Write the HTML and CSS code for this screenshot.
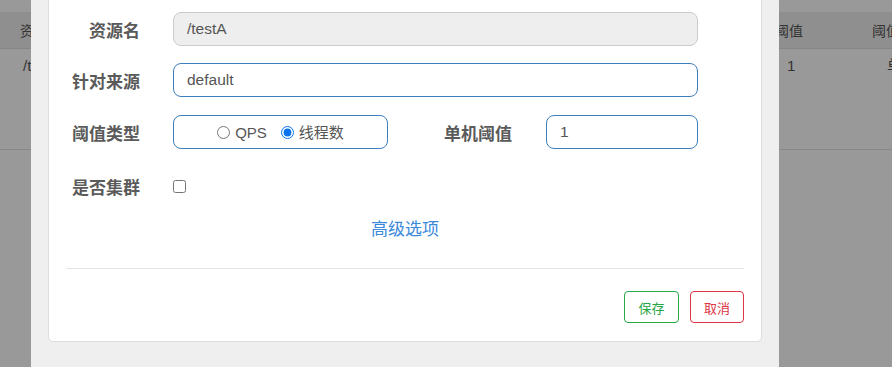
FILE: index.html
```html
<!DOCTYPE html>
<html lang="zh-CN">
<head>
<meta charset="utf-8">
<title>流控规则</title>
<link rel="stylesheet" href="styles.css">
</head>
<body>
<div class="page">
  <div class="table">
    <div class="thead">
      <div class="c c1">资源名</div>
      <div class="c c2 c2h">单机阈值</div>
      <div class="c c3 c3h">阈值模式</div>
    </div>
    <div class="trow">
      <div class="c c1 c1r">/testA</div>
      <div class="c c2 c2r">1</div>
      <div class="c c3 c3r">单机</div>
    </div>
  </div>

  <div class="modal">
    <div class="card">
      <form class="form">
        <div class="row">
          <label class="lbl">资源名</label>
          <input class="inp inp-wide inp-disabled" type="text" value="/testA" disabled>
        </div>
        <div class="row">
          <label class="lbl">针对来源</label>
          <input class="inp inp-wide" type="text" value="default">
        </div>
        <div class="row">
          <label class="lbl">阈值类型</label>
          <div class="radio-group">
            <label class="radio"><input type="radio" name="grade"><span>QPS</span></label>
            <label class="radio"><input type="radio" name="grade" checked><span>线程数</span></label>
          </div>
          <label class="lbl lbl2">单机阈值</label>
          <input class="inp inp-small" type="text" value="1">
        </div>
        <div class="row row-check">
          <label class="lbl">是否集群</label>
          <input class="check" type="checkbox">
        </div>
        <div class="adv"><a class="adv-link">高级选项</a></div>
      </form>
      <hr class="sep">
      <div class="footer">
        <button class="btn btn-save" type="button">保存</button>
        <button class="btn btn-cancel" type="button">取消</button>
      </div>
    </div>
  </div>
</div>
</body>
</html>
```
FILE: styles.css
```css
html, body {
  margin: 0;
  padding: 0;
}
body {
  background: #999999;
  font-family: "Liberation Sans", "Noto Sans CJK SC", sans-serif;
  width: 892px;
  height: 367px;
  overflow: hidden;
}
.page {
  position: relative;
  width: 892px;
  height: 367px;
  overflow: hidden;
}

/* background table under overlay */
.table {
  padding-top: 12px;
  color: #333333;
  font-size: 14px;
}
.thead {
  display: flex;
  height: 36px;
  align-items: center;
  background: #8f8f8f;
  border-bottom: 1px solid #858585;
}
.trow {
  display: flex;
  height: 100px;
  align-items: flex-start;
  border-bottom: 1px solid #878787;
  font-size: 15px;
}
.trow .c {
  padding-top: 8px;
  line-height: 18px;
}
.c {
  box-sizing: border-box;
  white-space: nowrap;
  overflow: hidden;
}
.c1 { width: 740px; padding-left: 20px; }
.c1r { padding-left: 23px; }
.c2 { width: 120px; }
.c3 { width: 32px; }
.c2h { padding-left: 7px; }
.c2r { padding-left: 47px; }
.c3h { padding-left: 12px; }
.c3r { padding-left: 27px; }

/* modal */
.modal {
  position: absolute;
  top: 0;
  left: 31px;
  width: 748px;
  height: 367px;
  background: #efefef;
}
.card {
  box-sizing: border-box;
  margin-left: 17px;
  margin-top: -30px;
  width: 714px;
  background: #ffffff;
  border: 1px solid #dddddd;
  border-radius: 5px;
  padding: 41px 17px 18px;
}
.form {
  margin: 0;
}
.row {
  display: flex;
  align-items: center;
  height: 34px;
  margin-bottom: 17px;
}
.row:nth-child(2) {
  margin-bottom: 18px;
}
.row-check {
  height: 40px;
  margin-bottom: 0;
}
.lbl {
  box-sizing: border-box;
  width: 74px;
  text-align: right;
  font-family: "Noto Sans CJK SC", sans-serif;
  font-weight: bold;
  font-size: 17px;
  color: #5a5a5a;
  margin-right: 33px;
  white-space: nowrap;
}
.lbl2 {
  width: 124px;
  margin-right: 34px;
}
.inp {
  box-sizing: border-box;
  height: 34px;
  border: 1px solid #3f7ebe;
  border-radius: 8px;
  padding: 0 13px;
  font-family: "Liberation Sans", "Noto Sans CJK SC", sans-serif;
  font-size: 15.5px;
  color: #555555;
  background: #ffffff;
  outline: none;
  margin: 0;
}
.inp-wide { width: 525px; }
.inp-small { width: 152px; }
.inp-disabled {
  background: #eeeeee;
  border-color: #cccccc;
  color: #555555;
}

.radio-group {
  box-sizing: border-box;
  width: 215px;
  height: 34px;
  border: 1px solid #3f7ebe;
  border-radius: 8px;
  display: flex;
  align-items: center;
  justify-content: center;
  gap: 14px;
  font-size: 15px;
  color: #555555;
}
.radio {
  display: flex;
  align-items: center;
  gap: 5px;
  font-family: "Liberation Sans", "Noto Sans CJK SC", sans-serif;
}
.radio input {
  margin: 0;
  width: 13px;
  height: 13px;
  accent-color: #0a74f0;
}
.radio span {
  line-height: 18px;
  padding-top: 2px;
}
.check {
  margin: 0;
  width: 13px;
  height: 13px;
}

.adv {
  text-align: center;
  margin-top: 11px;
  line-height: 22px;
}
.adv-link {
  font-family: "Noto Sans CJK SC", sans-serif;
  font-size: 17px;
  color: #3a8ad9;
  cursor: pointer;
}

.sep {
  margin: 27px 0 0;
  border: 0;
  border-top: 1px solid #e3e3e3;
  height: 0;
}
.footer {
  display: flex;
  justify-content: flex-end;
  gap: 11px;
  margin-top: 22px;
}
.btn {
  box-sizing: border-box;
  width: 55px;
  height: 32px;
  background: #ffffff;
  border: 1px solid;
  border-radius: 4px;
  font-family: "Noto Sans CJK SC", sans-serif;
  font-size: 13px;
  padding: 0;
  cursor: pointer;
}
.btn-save {
  color: #28a745;
  border-color: #28a745;
}
.btn-cancel {
  width: 54px;
  color: #dc3545;
  border-color: #dc3545;
}
```
